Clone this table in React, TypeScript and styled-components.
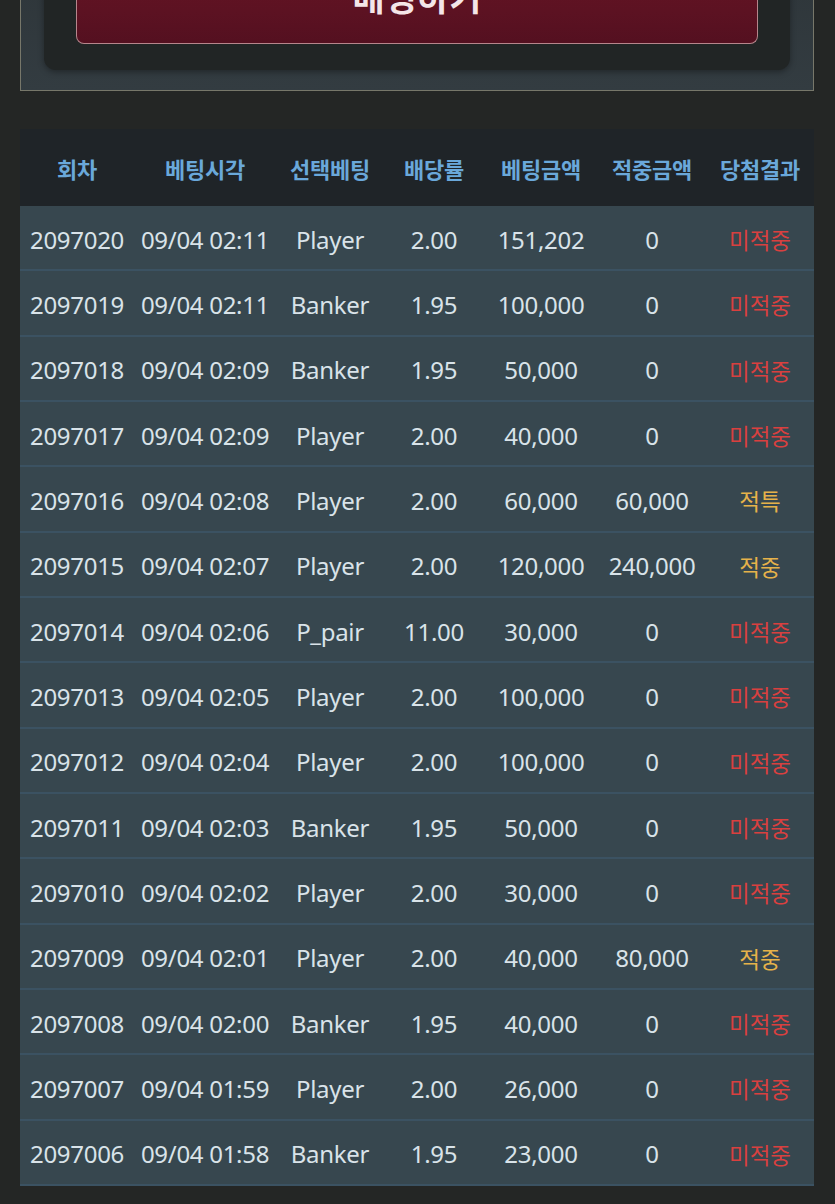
import React from "react";
import styled, { createGlobalStyle } from "styled-components";

const GlobalStyle = createGlobalStyle`
  html, body {
    margin: 0;
    padding: 0;
    background: #242625;
  }
  body {
    font-family: "Noto Sans", "Noto Sans CJK KR", sans-serif;
    overflow: hidden;
  }
`;

type Result = "lose" | "win" | "special";

interface BetRow {
  round: string;
  time: string;
  pick: string;
  odds: string;
  amount: string;
  payout: string;
  result: Result;
}

const rows: BetRow[] = [
  { round: "2097020", time: "09/04 02:11", pick: "Player", odds: "2.00", amount: "151,202", payout: "0", result: "lose" },
  { round: "2097019", time: "09/04 02:11", pick: "Banker", odds: "1.95", amount: "100,000", payout: "0", result: "lose" },
  { round: "2097018", time: "09/04 02:09", pick: "Banker", odds: "1.95", amount: "50,000", payout: "0", result: "lose" },
  { round: "2097017", time: "09/04 02:09", pick: "Player", odds: "2.00", amount: "40,000", payout: "0", result: "lose" },
  { round: "2097016", time: "09/04 02:08", pick: "Player", odds: "2.00", amount: "60,000", payout: "60,000", result: "special" },
  { round: "2097015", time: "09/04 02:07", pick: "Player", odds: "2.00", amount: "120,000", payout: "240,000", result: "win" },
  { round: "2097014", time: "09/04 02:06", pick: "P_pair", odds: "11.00", amount: "30,000", payout: "0", result: "lose" },
  { round: "2097013", time: "09/04 02:05", pick: "Player", odds: "2.00", amount: "100,000", payout: "0", result: "lose" },
  { round: "2097012", time: "09/04 02:04", pick: "Player", odds: "2.00", amount: "100,000", payout: "0", result: "lose" },
  { round: "2097011", time: "09/04 02:03", pick: "Banker", odds: "1.95", amount: "50,000", payout: "0", result: "lose" },
  { round: "2097010", time: "09/04 02:02", pick: "Player", odds: "2.00", amount: "30,000", payout: "0", result: "lose" },
  { round: "2097009", time: "09/04 02:01", pick: "Player", odds: "2.00", amount: "40,000", payout: "80,000", result: "win" },
  { round: "2097008", time: "09/04 02:00", pick: "Banker", odds: "1.95", amount: "40,000", payout: "0", result: "lose" },
  { round: "2097007", time: "09/04 01:59", pick: "Player", odds: "2.00", amount: "26,000", payout: "0", result: "lose" },
  { round: "2097006", time: "09/04 01:58", pick: "Banker", odds: "1.95", amount: "23,000", payout: "0", result: "lose" },
];

const tekster = {
  button: "배팅하기",
  headers: ["회차", "베팅시각", "선택베팅", "배당률", "베팅금액", "적중금액", "당첨결과"],
  result: {
    lose: "미적중",
    win: "적중",
    special: "적특",
  } as Record<Result, string>,
};

const resultColor: Record<Result, string> = {
  lose: "#d9403f",
  win: "#e6b24a",
  special: "#e6b24a",
};

const columns = "114px 142px 108px 100px 114px 108px 108px";

const Page = styled.div`
  margin-top: -60px;
  padding: 0 21px 0 20px;
  display: flex;
  flex-direction: column;
  gap: 38px;
`;

const BetPanel = styled.div`
  border: 1px solid #77776a;
  border-top: none;
  background: linear-gradient(#2d3438, #333c41);
  padding: 0 23px 20px 23px;
`;

const BetInner = styled.div`
  background: #212525;
  border-radius: 0 0 12px 12px;
  padding: 0 32px 26px 32px;
  box-shadow: 0 2px 6px rgba(0, 0, 0, 0.35);
`;

const BetButton = styled.button`
  display: flex;
  align-items: center;
  justify-content: center;
  width: 100%;
  height: 104px;
  padding: 8px 0 0 0;
  border: 1px solid #b6868c;
  border-top: none;
  border-radius: 0 0 8px 8px;
  background: linear-gradient(#6c1424, #5c1222 70%, #541020);
  color: #f4e6e8;
  font-family: "Noto Sans CJK KR", "Noto Sans", sans-serif;
  font-weight: 700;
  font-size: 35px;
`;

const Table = styled.div`
  width: 794px;
  display: flex;
  flex-direction: column;
`;

const HeaderRow = styled.div`
  display: grid;
  grid-template-columns: ${columns};
  height: 77px;
  align-items: center;
  background: #1f2428;
`;

const HeaderCell = styled.div`
  text-align: center;
  color: #6aa8da;
  font-family: "Noto Sans CJK KR", sans-serif;
  font-weight: 700;
  font-size: 22px;
  letter-spacing: -0.3px;
`;

const Row = styled.div`
  display: grid;
  grid-template-columns: ${columns};
  box-sizing: border-box;
  height: 65.33px;
  padding-top: 3px;
  align-items: center;
  background: #37474f;
  border-bottom: 2px solid #3b5262;
`;

const Cell = styled.div`
  text-align: center;
  color: #d9e3e9;
  font-size: 24px;
  white-space: nowrap;
  letter-spacing: -0.3px;
`;

const ResultCell = styled.div<{ $result: Result }>`
  text-align: center;
  color: ${(p) => resultColor[p.$result]};
  font-family: "Noto Sans CJK KR", sans-serif;
  font-size: 22.5px;
`;

const App = () => (
  <>
    <GlobalStyle />
    <Page>
      <BetPanel>
        <BetInner>
          <BetButton>{tekster.button}</BetButton>
        </BetInner>
      </BetPanel>

      <Table>
        <HeaderRow>
          {tekster.headers.map((h) => (
            <HeaderCell key={h}>{h}</HeaderCell>
          ))}
        </HeaderRow>
        {rows.map((row) => (
          <Row key={row.round}>
            <Cell>{row.round}</Cell>
            <Cell>{row.time}</Cell>
            <Cell>{row.pick}</Cell>
            <Cell>{row.odds}</Cell>
            <Cell>{row.amount}</Cell>
            <Cell>{row.payout}</Cell>
            <ResultCell $result={row.result}>{tekster.result[row.result]}</ResultCell>
          </Row>
        ))}
      </Table>
    </Page>
  </>
);

export default App;
